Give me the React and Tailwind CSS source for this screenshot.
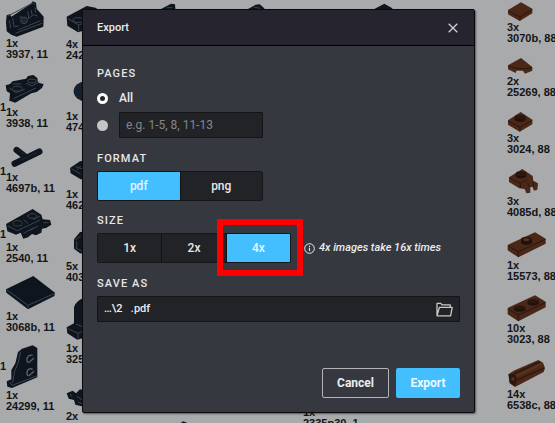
import React, { useState } from "react";

const DARK = "#0e151e";
const EDGE = "#3c444d";
const BROWN = "#4a2717";
const BROWN_LIGHT = "#5a3320";
const BROWN_DARK = "#2b170e";

/* Parts are drawn at three units per pixel of the sheet. */
const parts = [
  {
    x: 5, y: 0, box: "15 0 120 114", w: 40, h: 38,
    label: ["1x", "3937, 11"], lx: 6, ly: 38,
    art: (
      <>
        <path d="M18 66 20 46 30 42 34 50 92 12 98 4 108 8 110 26 131 50 130 80 50 110 34 104 20 94Z" fill={DARK} />
        <path d="M24 48 98 9 104 14M38 54 42 80 56 78M58 52 66 50M84 34 86 56 100 44 112 48M46 100 126 70M28 60 32 84M94 30 96 44M54 90 122 62M104 22 108 38" stroke={EDGE} strokeWidth="3" fill="none" />
        <ellipse cx="72" cy="61" rx="10" ry="10" fill="#20272f" stroke={EDGE} strokeWidth="3" />
      </>
    ),
  },
  {
    x: 5, y: 73, box: "15 219 120 93", w: 40, h: 31,
    label: ["1x", "3938, 11"], lx: 6, ly: 107, marker: 102,
    art: (
      <>
        <path d="M17 256 30 252 38 244 78 236 84 228 100 225 112 234 114 248 131 252 126 264 110 276 94 280 46 308 28 302 30 280 20 274Z" fill={DARK} />
        <path d="M40 296 108 264M28 264 48 278 74 268M78 250 96 258 118 246M38 252 64 252" stroke={EDGE} strokeWidth="3" fill="none" />
        <ellipse cx="52" cy="266" rx="15" ry="7" fill={DARK} stroke={EDGE} strokeWidth="3" />
        <ellipse cx="96" cy="243" rx="13" ry="6" fill={DARK} stroke={EDGE} strokeWidth="3" />
      </>
    ),
  },
  {
    x: 11, y: 145, box: "33 15 96 69", w: 32, h: 23,
    label: ["1x", "4697b, 11"], lx: 6, ly: 172, marker: 166,
    art: (
      <>
        <path d="M44 71 118 35M50 30 76 50" stroke={DARK} strokeWidth="19" strokeLinecap="round" />
        <path d="M63 60 112 37M55 29 73 44" stroke="#1d2833" strokeWidth="3" />
      </>
    ),
  },
  {
    x: 5, y: 208, box: "15 204 144 96", w: 48, h: 32,
    label: ["1x", "2540, 11"], lx: 6, ly: 242, marker: 229,
    art: (
      <>
        <path d="M18 252 98 207 124 224 128 238 150 240 154 254 138 264 126 266 124 278 108 286 96 282 84 292 70 296 62 278 48 284 22 274Z" fill={DARK} />
        <path d="M24 258 52 272 120 240M82 226 102 238 120 228M70 280 104 262M88 272 114 258M130 248 146 248M70 238 84 250" stroke={EDGE} strokeWidth="3" fill="none" />
        <ellipse cx="53" cy="250" rx="14" ry="8" fill={DARK} stroke={EDGE} strokeWidth="3" />
        <ellipse cx="97" cy="228" rx="13" ry="7" fill={DARK} stroke={EDGE} strokeWidth="3" />
      </>
    ),
  },
  {
    x: 5, y: 275, box: "15 15 153 105", w: 51, h: 35,
    label: ["1x", "3068b, 11"], lx: 6, ly: 311,
    art: (
      <>
        <path d="M18 58 100 18 165 68 163 78 84 118 19 68Z" fill={DARK} />
        <path d="M20 59 84 106 164 70M84 106V116" stroke={EDGE} strokeWidth="3" fill="none" />
      </>
    ),
  },
  {
    x: 5, y: 344, box: "15 222 99 135", w: 33, h: 45,
    label: ["1x", "24299, 11"], lx: 6, ly: 390, marker: 361,
    art: (
      <>
        <path d="M20 334 34 328 34 300 46 280 54 246 66 236 98 226 112 234 112 322 36 354 22 350Z" fill={DARK} />
        <path d="M62 244 54 280 44 304 38 338M30 336 36 346 110 318" stroke={EDGE} strokeWidth="3" fill="none" />
        <path d="M98 256C84 252 76 266 84 278M86 278 102 264M98 298C84 292 76 306 84 318M86 318 102 304" stroke="#59616a" strokeWidth="4" fill="none" />
      </>
    ),
  },
  {
    x: 66, y: 5, box: "198 15 108 84", w: 36, h: 28,
    label: ["4x", "242"], lx: 66, ly: 39,
    art: (
      <>
        <path d="M200 50 260 18 290 24 280 84 234 97 202 77Z" fill={DARK} />
        <path d="M204 56 236 75 270 62M236 76V94" stroke={EDGE} strokeWidth="3" fill="none" />
        <ellipse cx="234" cy="60" rx="15" ry="7" fill={DARK} stroke={EDGE} strokeWidth="3" />
      </>
    ),
  },
  {
    x: 73, y: 80, box: "219 240 60 66", w: 20, h: 22,
    label: ["1x", "474"], lx: 66, ly: 111,
    art: <ellipse cx="258" cy="274" rx="37" ry="30" fill="#12212d" />,
  },
  {
    x: 69, y: 160, box: "207 60 60 60", w: 20, h: 20,
    label: ["1x", "462"], lx: 66, ly: 189,
    art: (
      <>
        <path d="M210 84 240 64 266 60V118L242 118 212 100Z" fill={DARK} />
        <path d="M214 86 242 102M226 80 246 86M230 90 242 78" stroke={EDGE} strokeWidth="3" />
      </>
    ),
  },
  {
    x: 73, y: 231, box: "219 273 60 72", w: 20, h: 24,
    label: ["5x", "403"], lx: 66, ly: 261,
    art: (
      <>
        <path d="M222 298 240 276 270 274V344L240 340 222 326Z" fill={DARK} />
        <path d="M226 300 242 288M230 304V324M226 324 248 334" stroke={EDGE} strokeWidth="3" />
      </>
    ),
  },
  {
    x: 66, y: 297, box: "198 81 60 129", w: 20, h: 43,
    label: ["1x", "325"], lx: 66, ly: 343,
    art: (
      <>
        <path d="M200 172 222 160V112Q226 92 258 82V202L232 209 202 190Z" fill={DARK} />
        <path d="M204 176 234 190 256 180M234 190V206M228 162 246 170" stroke={EDGE} strokeWidth="3" fill="none" />
      </>
    ),
  },
  {
    x: 66, y: 389, box: "198 357 60 60", w: 20, h: 20,
    label: ["2x"], lx: 66, ly: 411,
    art: (
      <>
        <path d="M200 370 218 362 228 370 240 358 258 362V412L226 404 222 390 206 386Z" fill={DARK} />
        <path d="M210 372 216 380M230 378 246 390M234 396 250 402" stroke={EDGE} strokeWidth="3" />
      </>
    ),
  },
  {
    x: 157, y: 3, box: "0 0 60 30", w: 20, h: 10,
    art: <><path d="M5 22 42 2 54 4 56 30H5Z" fill={DARK} /><path d="M30 14 46 14" stroke={EDGE} strokeWidth="3" /></>,
  },
  {
    x: 245, y: 3, box: "0 0 60 30", w: 20, h: 10,
    art: <><path d="M5 20 32 5 44 4 58 16V30H5Z" fill={DARK} /><path d="M26 12 46 16" stroke={EDGE} strokeWidth="3" /></>,
  },
  {
    x: 373, y: 3, box: "0 0 60 30", w: 20, h: 10,
    art: <path d="M4 18 34 2 58 16V30H4Z" fill={DARK} />,
  },
  {
    x: 180, y: 421, box: "0 0 24 6", w: 8, h: 2,
    art: <path d="M2 6 10 1 22 6Z" fill={DARK} />,
  },
  { x: 303, y: 400, label: ["1x", "2335p30, 1"], lx: 303, ly: 407 },
  {
    x: 507, y: 1, box: "126 3 81 63", w: 27, h: 21,
    label: ["3x", "3070b, 88"], lx: 507, ly: 22,
    art: (
      <>
        <path d="M129 30 168 7 202 26V40L164 63 129 43Z" fill={BROWN} />
        <path d="M130 32 165 51 202 29M165 51V61" stroke={BROWN_DARK} strokeWidth="3" fill="none" />
      </>
    ),
  },
  {
    x: 507, y: 57, box: "126 171 81 54", w: 27, h: 18,
    label: ["2x", "25269, 88"], lx: 507, ly: 76,
    art: (
      <>
        <path d="M129 196 168 174 202 201V212L180 221 174 212 154 212 152 219 129 208Z" fill={BROWN} />
        <path d="M130 198Q160 212 201 203" stroke={BROWN_DARK} strokeWidth="3" fill="none" />
      </>
    ),
  },
  {
    x: 507, y: 111, box: "126 333 81 63", w: 27, h: 21,
    label: ["3x", "3024, 88"], lx: 507, ly: 133,
    art: (
      <>
        <path d="M129 361 167 336 202 359V373L164 395 129 374Z" fill={BROWN} />
        <path d="M130 363 165 382 202 361M165 382V394" stroke={BROWN_DARK} strokeWidth="3" fill="none" />
        <path d="M149 351V360Q166 372 182 360V351Z" fill="#1e120d" />
        <ellipse cx="165" cy="351" rx="16" ry="7" fill={BROWN_DARK} />
      </>
    ),
  },
  {
    x: 508, y: 168, box: "129 84 96 78", w: 32, h: 26,
    label: ["3x", "4085d, 88"], lx: 507, ly: 196,
    art: (
      <>
        <path d="M132 112 172 87 203 108 205 122 219 130 217 149 207 152 202 140 196 142V158L184 160 179 147 163 145 132 126Z" fill={BROWN} />
        <path d="M133 113 166 130 188 118M166 130V144M188 128 192 142M204 126 206 140" stroke={BROWN_DARK} strokeWidth="3" fill="none" />
        <path d="M152 101V110Q167 120 184 110V101Z" fill="#1e120d" />
        <ellipse cx="168" cy="101" rx="16" ry="7" fill={BROWN_DARK} />
      </>
    ),
  },
  {
    x: 507, y: 232, box: "126 276 120 81", w: 40, h: 27,
    label: ["1x", "15573, 88"], lx: 507, ly: 260,
    art: (
      <>
        <path d="M128 315 210 277 242 296V311L160 352 128 331Z" fill={BROWN} />
        <path d="M129 318 160 335 241 298M160 335V350" stroke={BROWN_DARK} strokeWidth="3" fill="none" />
        <path d="M168 298V309Q184 321 201 309V298Z" fill="#1e120d" />
        <ellipse cx="184" cy="298" rx="16" ry="8" fill={BROWN_DARK} />
        <ellipse cx="184" cy="299" rx="8" ry="4" fill={BROWN_LIGHT} />
      </>
    ),
  },
  {
    x: 507, y: 295, box: "126 75 120 81", w: 40, h: 27,
    label: ["10x", "3023, 88"], lx: 507, ly: 323,
    art: (
      <>
        <path d="M128 114 210 76 242 95V112L160 154 128 133Z" fill={BROWN} />
        <path d="M129 117 160 135 241 98M160 135V152" stroke={BROWN_DARK} strokeWidth="3" fill="none" />
        <path d="M147 112V121Q163 130 181 121V112ZM188 93V102Q204 111 221 102V93Z" fill="#1e120d" />
        <ellipse cx="164" cy="112" rx="17" ry="6" fill={BROWN_DARK} />
        <ellipse cx="205" cy="93" rx="17" ry="6" fill={BROWN_DARK} />
      </>
    ),
  },
  {
    x: 507, y: 359, box: "126 267 120 87", w: 40, h: 29,
    label: ["14x", "6538c, 88"], lx: 507, ly: 389,
    art: (
      <>
        <path d="M130 313 146 302 220 270 234 278 240 294 236 306 150 351 134 340Z" fill={BROWN} />
        <path d="M148 311 226 275M156 330 237 294" stroke={BROWN_DARK} strokeWidth="4" />
        <path d="M154 318 230 282" stroke={BROWN_LIGHT} strokeWidth="6" />
        <path d="M131 313 148 311 156 328 150 348 134 338Z" fill={BROWN_DARK} />
        <circle cx="144" cy="327" r="5" fill={BROWN_LIGHT} />
      </>
    ),
  },
];

function PartsSheet() {
  return (
    <div aria-hidden="true" className="absolute inset-0 overflow-hidden font-['Liberation_Sans',Arial,sans-serif] text-[11px] leading-[11px] font-bold text-[#141516]">
      {parts.map((p) => (
        <React.Fragment key={`${p.x}-${p.y}`}>
          {p.art && (
            <svg className="absolute" style={{ left: p.x, top: p.y }} width={p.w} height={p.h} viewBox={p.box}>
              {p.art}
            </svg>
          )}
          {p.marker && (
            <span className="absolute left-0" style={{ top: p.marker }}>1</span>
          )}
          {p.label && (
            <p className="absolute whitespace-nowrap" style={{ left: p.lx, top: p.ly }}>
              {p.label[0]}
              <br />
              {p.label[1]}
            </p>
          )}
        </React.Fragment>
      ))}
    </div>
  );
}

const heading = "text-[11px] leading-4 font-medium tracking-widest text-[#e6e6e8]";
const field = "h-[26px] rounded-[1px] border border-[#131417] bg-[#222327]";

function Segments({ label, options, value, onChange, className }) {
  return (
    <div role="group" aria-label={label} className={`flex h-[30px] divide-x divide-[#111216] overflow-hidden rounded-[2px] border border-[#15161a] bg-[#222327] ${className}`}>
      {options.map((o) => (
        <button
          key={o}
          type="button"
          aria-pressed={o === value}
          onClick={() => onChange(o)}
          className={`flex-1 text-xs font-medium ${o === value ? "bg-[#43bfff] text-[#e3f5ff]" : "text-[#e8e8e9]"}`}
        >
          {o}
        </button>
      ))}
    </div>
  );
}

export default function App() {
  const [format, setFormat] = useState("pdf");
  const [size, setSize] = useState("4x");
  const [pages, setPages] = useState("all");
  const radio = "size-[11px] shrink-0 appearance-none rounded-full bg-[#c4c4c4] checked:border-[3px] checked:border-white checked:bg-[#25262c]";

  return (
    <main className="relative flex min-h-screen items-start justify-center overflow-hidden bg-[#a9aaac] pt-[9px] pl-0.5 font-[Roboto,sans-serif] text-[#ececee]">
      <PartsSheet />
      <section role="dialog" aria-labelledby="export-title" className="relative w-full max-w-[393px] rounded-[2px] border border-[#0b0b0e] bg-[#363840] shadow-[1px_1px_2px_rgba(0,0,0,0.5)]">
        <header className="flex h-9 items-center justify-between border-b border-black bg-[#26252f] px-3.5">
          <h1 id="export-title" className="text-[11px] leading-4 font-medium">Export</h1>
          <button type="button" aria-label="Close" className="p-0.5 text-[#cfcfd2]">
            <svg width="10" height="10" viewBox="0 0 10 10" stroke="currentColor" strokeWidth="1.3">
              <path d="M.7 .7 9.3 9.3M9.3 .7 .7 9.3" />
            </svg>
          </button>
        </header>
        <form className="px-3.5 pt-5 pb-3.5" onSubmit={(e) => e.preventDefault()}>
          <h2 className={heading}>PAGES</h2>
          <label className="mt-2 flex h-4 items-center gap-[11px] text-xs font-medium">
            <input type="radio" name="pages" className={radio} checked={pages === "all"} onChange={() => setPages("all")} />
            All
          </label>
          <div className="mt-1.5 flex items-center gap-[11px]">
            <input type="radio" name="pages" aria-label="Page range" className={radio} checked={pages === "range"} onChange={() => setPages("range")} />
            <input type="text" aria-label="Pages to export" placeholder="e.g. 1-5, 8, 11-13" className={`${field} w-36 px-1.5 text-xs placeholder:text-[#85868a]`} />
          </div>

          <h2 className={`${heading} mt-[13px]`}>FORMAT</h2>
          <Segments label="Format" options={["pdf", "png"]} value={format} onChange={setFormat} className="mt-1 w-[166px]" />

          <h2 className={`${heading} mt-3`}>SIZE</h2>
          <div className="mt-1 flex items-center">
            <div className="relative">
              <Segments label="Size" options={["1x", "2x", "4x"]} value={size} onChange={setSize} className="w-[194px]" />
              <span className="pointer-events-none absolute -top-3.5 -right-3 h-[57px] w-[86px] border-6 border-[#ff0000]" />
            </div>
            <p className="ml-[13px] flex items-center gap-1 text-[11px] font-medium whitespace-nowrap italic">
              <svg width="11" height="11" viewBox="0 0 11 11" fill="none" stroke="currentColor">
                <circle cx="5.5" cy="5.5" r="4.8" />
                <path d="M5.5 4.8V8M5.5 2.8V3.9" strokeWidth="1.1" />
              </svg>
              4x images take 16x times
            </p>
          </div>

          <h2 className={`${heading} mt-[13px]`}>
            <label htmlFor="save-as">SAVE AS</label>
          </h2>
          <div className={`${field} mt-1 flex items-center px-1.5`}>
            <input id="save-as" type="text" defaultValue={"…\\2   .pdf"} className="min-w-0 flex-1 bg-transparent text-[11px] font-medium" />
            <button type="button" aria-label="Browse" className="text-[#c9c9cb]">
              <svg width="17" height="15" viewBox="0 0 17 15" fill="none" stroke="currentColor" strokeWidth="1.3">
                <path d="M1 13.8V1.4H4.8L6 2.8H14.2V5.4M1 13.8 3.4 5.4H16.2L14.6 13.8Z" strokeLinejoin="round" />
              </svg>
            </button>
          </div>

          <div className="mt-[46px] flex justify-end gap-[7px]">
            <button type="button" className="h-[30px] w-[67px] rounded-[2px] border border-[#b4b4b8] text-xs font-bold">Cancel</button>
            <button type="submit" className="h-[30px] w-16 rounded-[2px] bg-[#43bfff] text-xs font-bold text-[#eefaff]">Export</button>
          </div>
        </form>
      </section>
    </main>
  );
}
